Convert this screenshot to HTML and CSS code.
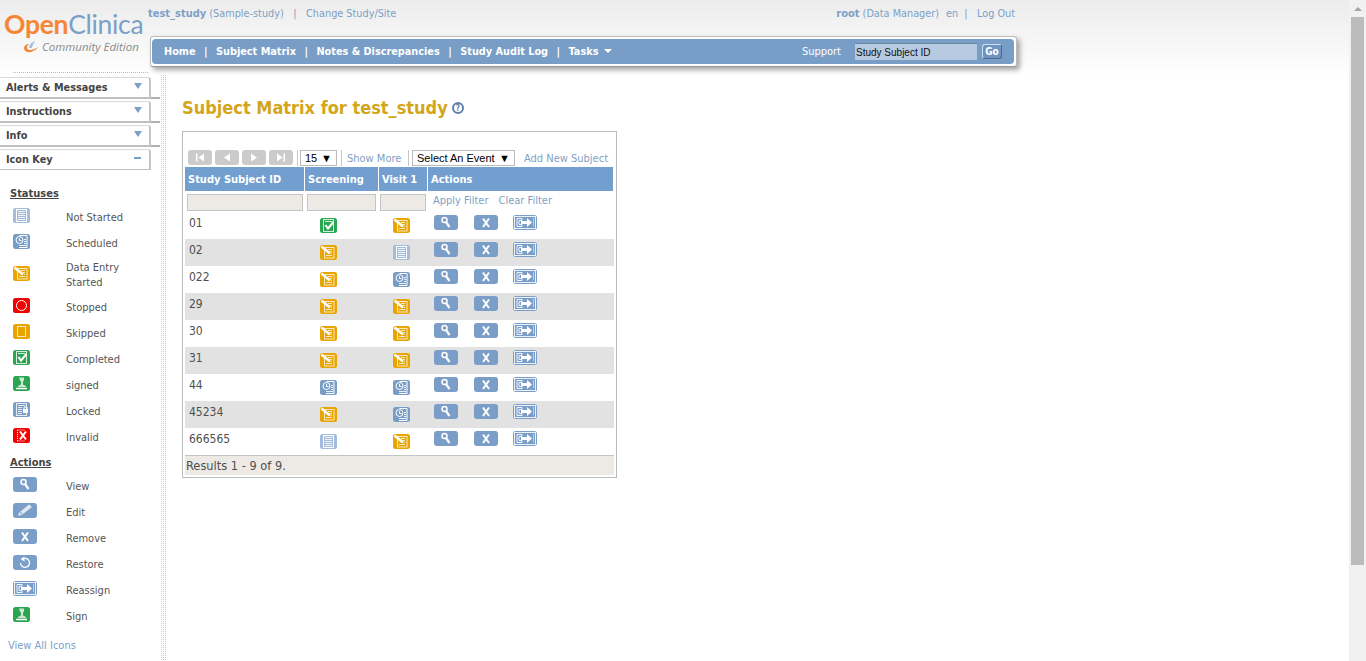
FILE: index.html
```html
<!DOCTYPE html>
<html lang="en">
<head>
<meta charset="utf-8">
<title>OpenClinica - Subject Matrix</title>
<link rel="stylesheet" href="styles.css">
</head>
<body>
<svg class="defs" width="0" height="0" aria-hidden="true">
  <defs>
    <symbol id="i-notstarted" viewBox="0 0 17 15"><rect width="17" height="15" rx="2.5" fill="#a3bcdb"/><rect x="3.500" y="1.500" width="10" height="12" fill="none" stroke="#fff"/><path d="M5 3.500h7M5 5.500h7M5 7.500h7M5 9.500h7M5 11.500h7" stroke="#fff" stroke-opacity=".85"/></symbol>
    <symbol id="i-scheduled" viewBox="0 0 17 15"><rect width="17" height="15" rx="2.5" fill="#789ec7"/><path d="M6.500 1.500h7.500v12h-8" fill="none" stroke="#fff"/><path d="M11 5.500h2M11 7.500h2M11 9.500h2M6 11.500h7" stroke="#fff" stroke-opacity=".85"/><circle cx="6.500" cy="6" r="3.500" fill="#789ec7" stroke="#fff"/><path d="M6.500 4v2.500h2" fill="none" stroke="#fff"/></symbol>
    <symbol id="i-entry" viewBox="0 0 17 15"><rect width="17" height="15" rx="2.5" fill="#e8a400"/><rect x="4.500" y="2.500" width="9.500" height="10.500" fill="none" stroke="#fff" stroke-opacity=".75"/><path d="M8 4.500h4M10 6.500h2M11 8.500h1M6 10.500h6" stroke="#fff" stroke-opacity=".75"/><path d="M1.500 1.500L10 8.500" stroke="#fff" stroke-width="2.500"/></symbol>
    <symbol id="i-stopped" viewBox="0 0 17 15"><rect width="17" height="15" rx="2.500" fill="#f40000"/><circle cx="8.500" cy="7.500" r="5" fill="none" stroke="#fff"/></symbol>
    <symbol id="i-skipped" viewBox="0 0 17 15"><rect width="17" height="15" rx="2.500" fill="#e8a400"/><rect x="4.500" y="2.500" width="8" height="10" fill="none" stroke="#fff" stroke-opacity=".75"/></symbol>
    <symbol id="i-completed" viewBox="0 0 17 15"><rect width="17" height="15" rx="2.500" fill="#2ca553"/><rect x="3.500" y="1.500" width="10" height="12" fill="none" stroke="#fff" stroke-opacity=".8"/><path d="M5 3.500h7" stroke="#fff" stroke-opacity=".8"/><path d="M5.500 7l2.500 3.500 5.500-6.500" fill="none" stroke="#fff" stroke-width="2"/></symbol>
    <symbol id="i-signed" viewBox="0 0 17 15"><rect width="17" height="15" rx="2.500" fill="#2ca553"/><path d="M6 1.500h5v3l-1 1v3l3 1.500v1h-8v-1l3-1.500v-3l-1-1z" fill="#cfe8d6"/><path d="M3 12.500h11" stroke="#fff" stroke-width="1.500"/></symbol>
    <symbol id="i-locked" viewBox="0 0 17 15"><rect width="17" height="15" rx="2.500" fill="#789ec7"/><rect x="3.500" y="1.500" width="10" height="12" fill="none" stroke="#fff" stroke-opacity=".8"/><path d="M5 3.500h7M5 5.500h4M5 7.500h4M5 9.500h4M5 11.500h4" stroke="#fff" stroke-opacity=".8"/><rect x="10" y="7" width="5" height="4" fill="#fff"/><path d="M11 7V5h3v2" fill="none" stroke="#fff"/></symbol>
    <symbol id="i-invalid" viewBox="0 0 17 15"><rect width="17" height="15" rx="2.500" fill="#f40000"/><path d="M4.500 2v11M4.500 2h8M4.500 13h8" stroke="#fff" stroke-dasharray="1 1"/><path d="M7 3.500l6 8M13 3.500l-6 8" stroke="#fff" stroke-width="2"/></symbol>
    <symbol id="a-view" viewBox="0 0 24 15"><rect width="24" height="15" rx="3" fill="#7a9ec7"/><circle cx="10.500" cy="5" r="2.500" fill="none" stroke="#fff" stroke-width="1.500"/><path d="M12 7l3.500 5" stroke="#fff" stroke-width="2.200"/></symbol>
    <symbol id="a-edit" viewBox="0 0 24 15"><rect width="24" height="15" rx="3" fill="#7a9ec7"/><path d="M5 13l1.200-3.500 9.800-8 3 2.500-9.500 7.500z" fill="#dfe8f3"/><path d="M7 9l3 2.500" stroke="#7a9ec7"/></symbol>
    <symbol id="a-remove" viewBox="0 0 24 15"><rect width="24" height="15" rx="3" fill="#7a9ec7"/><path d="M9 3.500l6 8.500M15 3.500l-6 8.500" stroke="#fff" stroke-width="2"/></symbol>
    <symbol id="a-restore" viewBox="0 0 24 15"><rect width="24" height="15" rx="3" fill="#7a9ec7"/><path d="M9 4.500a4.500 4.500 0 1 1-1.500 3.500" fill="none" stroke="#fff" stroke-width="1.300"/><path d="M11.500 1.500v5l-4-2.500z" fill="#fff"/></symbol>
    <symbol id="a-reassign" viewBox="0 0 24 15"><rect width="24" height="15" rx="3" fill="#7a9ec7"/><rect x="1.500" y="1.500" width="21" height="12" fill="none" stroke="#fff" stroke-opacity=".85"/><path d="M4 3.500h5v2h-3v4h3v2h-5z" fill="none" stroke="#fff" stroke-width=".9"/><path d="M8 6h6V3l5 4.500-5 4.500V9H8z" fill="#fff"/><path d="M20.500 3.500v8" stroke="#fff" stroke-dasharray="1 1"/></symbol>
    <symbol id="p-first" viewBox="0 0 24 15"><rect width="24" height="15" rx="3" fill="#cbcbcb"/><path d="M8 3.500h1.500v8H8zM16 3.500v8l-5.500-4z" fill="#fff"/></symbol>
    <symbol id="p-prev" viewBox="0 0 24 15"><rect width="24" height="15" rx="3" fill="#cbcbcb"/><path d="M15 3.500v8l-6-4z" fill="#fff"/></symbol>
    <symbol id="p-next" viewBox="0 0 24 15"><rect width="24" height="15" rx="3" fill="#cbcbcb"/><path d="M9 3.500v8l6-4z" fill="#fff"/></symbol>
    <symbol id="p-last" viewBox="0 0 24 15"><rect width="24" height="15" rx="3" fill="#cbcbcb"/><path d="M14.500 3.500H16v8h-1.500zM8 3.500v8l5.500-4z" fill="#fff"/></symbol>
  </defs>
</svg>

<div class="page">
  <div class="content">
    <header class="header">
      <div class="logo">
        <div class="logo-name"><span class="logo-open">Open</span><span class="logo-clinica">Clinica</span></div>
        <div class="logo-edition">
          <svg class="logo-swirl" viewBox="0 0 14 12" width="14" height="12"><path d="M0 7c0 3 3 5 7 4 3-1 6-3 7-5-3 2-5 3-8 3-2 0-3-1-3-3 0-1 1-2 2-3-3 0-5 2-5 4z" fill="#f08a3c"/><path d="M5 7c0-3 3-6 6-7-1 2-3 5-3 7z" fill="#a9c0dc"/></svg>
          <span>Community Edition</span>
        </div>
      </div>
      <div class="header-main">
        <div class="userbar">
          <div class="userbar-group"><a class="strong">test_study</a> <a>(Sample-study)</a><span class="pipe">|</span><a>Change Study/Site</a></div>
          <div class="userbar-group"><a class="strong">root</a> <a>(Data Manager)</a><a class="lang">en</a><span class="pipe">|</span><a>Log Out</a></div>
        </div>
        <div class="navbox">
          <nav class="nav">
            <a>Home</a><span class="sep">|</span><a>Subject Matrix</a><span class="sep">|</span><a>Notes &amp; Discrepancies</a><span class="sep">|</span><a>Study Audit Log</a><span class="sep">|</span><a>Tasks <span class="caret"></span></a>
            <a class="support">Support</a>
            <input class="search" type="text" value="Study Subject ID">
            <button class="go" type="button">Go</button>
          </nav>
        </div>
      </div>
    </header>

    <div class="body">
      <aside class="sidebar">
        <div class="tab"><span>Alerts &amp; Messages</span><span class="tri"></span></div>
        <div class="tab"><span>Instructions</span><span class="tri"></span></div>
        <div class="tab"><span>Info</span><span class="tri"></span></div>
        <div class="tab tab-open"><span>Icon Key</span><span class="minus"></span></div>

        <div class="key">
          <h4 class="key-head">Statuses</h4>
          <ul class="key-list">
            <li><svg class="si"><use href="#i-notstarted"/></svg><span>Not Started</span></li>
            <li><svg class="si"><use href="#i-scheduled"/></svg><span>Scheduled</span></li>
            <li class="tall"><svg class="si"><use href="#i-entry"/></svg><span>Data Entry Started</span></li>
            <li><svg class="si"><use href="#i-stopped"/></svg><span>Stopped</span></li>
            <li><svg class="si"><use href="#i-skipped"/></svg><span>Skipped</span></li>
            <li><svg class="si"><use href="#i-completed"/></svg><span>Completed</span></li>
            <li><svg class="si"><use href="#i-signed"/></svg><span>signed</span></li>
            <li><svg class="si"><use href="#i-locked"/></svg><span>Locked</span></li>
            <li><svg class="si"><use href="#i-invalid"/></svg><span>Invalid</span></li>
          </ul>
          <h4 class="key-head key-head-actions">Actions</h4>
          <ul class="key-list">
            <li><svg class="ai"><use href="#a-view"/></svg><span>View</span></li>
            <li><svg class="ai"><use href="#a-edit"/></svg><span>Edit</span></li>
            <li><svg class="ai"><use href="#a-remove"/></svg><span>Remove</span></li>
            <li><svg class="ai"><use href="#a-restore"/></svg><span>Restore</span></li>
            <li><svg class="ai"><use href="#a-reassign"/></svg><span>Reassign</span></li>
            <li><svg class="si"><use href="#i-signed"/></svg><span>Sign</span></li>
          </ul>
        </div>
        <a class="all-icons">View All Icons</a>
      </aside>
      <div class="dots"></div>

      <main class="main">
        <h1 class="title">Subject Matrix for test_study <span class="help">?</span></h1>
        <section class="matrix">
          <div class="toolbar">
            <svg class="pg"><use href="#p-first"/></svg>
            <svg class="pg"><use href="#p-prev"/></svg>
            <svg class="pg"><use href="#p-next"/></svg>
            <svg class="pg"><use href="#p-last"/></svg>
            <span class="vr vr-first"></span>
            <span class="sel sel-size"><span>15</span><span class="arrow">▼</span></span>
            <span class="vr vr-mid"></span>
            <a class="tool-link show-more">Show More</a>
            <span class="vr vr-mid2"></span>
            <span class="sel sel-event"><span>Select An Event</span><span class="arrow">▼</span></span>
            <a class="tool-link add-new">Add New Subject</a>
          </div>
          <table class="grid">
            <colgroup><col class="c1"><col class="c2"><col class="c3"><col class="c4"></colgroup>
            <thead>
              <tr class="head"><th>Study Subject ID</th><th>Screening</th><th>Visit 1</th><th>Actions</th></tr>
              <tr class="filter">
                <td><input class="f f1" type="text"></td>
                <td><input class="f f2" type="text"></td>
                <td class="filter-third"><input class="f f3" type="text"></td>
                <td class="filter-links"><a class="filter-link">Apply Filter</a><a class="filter-link">Clear Filter</a></td>
              </tr>
            </thead>
            <tbody>
              <tr><td>01</td><td class="st"><svg class="si"><use href="#i-completed"/></svg></td><td class="st"><svg class="si"><use href="#i-entry"/></svg></td><td class="acts"><svg class="ai"><use href="#a-view"/></svg><svg class="ai"><use href="#a-remove"/></svg><svg class="ai"><use href="#a-reassign"/></svg></td></tr>
              <tr class="alt"><td>02</td><td class="st"><svg class="si"><use href="#i-entry"/></svg></td><td class="st"><svg class="si"><use href="#i-notstarted"/></svg></td><td class="acts"><svg class="ai"><use href="#a-view"/></svg><svg class="ai"><use href="#a-remove"/></svg><svg class="ai"><use href="#a-reassign"/></svg></td></tr>
              <tr><td>022</td><td class="st"><svg class="si"><use href="#i-entry"/></svg></td><td class="st"><svg class="si"><use href="#i-scheduled"/></svg></td><td class="acts"><svg class="ai"><use href="#a-view"/></svg><svg class="ai"><use href="#a-remove"/></svg><svg class="ai"><use href="#a-reassign"/></svg></td></tr>
              <tr class="alt"><td>29</td><td class="st"><svg class="si"><use href="#i-entry"/></svg></td><td class="st"><svg class="si"><use href="#i-entry"/></svg></td><td class="acts"><svg class="ai"><use href="#a-view"/></svg><svg class="ai"><use href="#a-remove"/></svg><svg class="ai"><use href="#a-reassign"/></svg></td></tr>
              <tr><td>30</td><td class="st"><svg class="si"><use href="#i-entry"/></svg></td><td class="st"><svg class="si"><use href="#i-entry"/></svg></td><td class="acts"><svg class="ai"><use href="#a-view"/></svg><svg class="ai"><use href="#a-remove"/></svg><svg class="ai"><use href="#a-reassign"/></svg></td></tr>
              <tr class="alt"><td>31</td><td class="st"><svg class="si"><use href="#i-entry"/></svg></td><td class="st"><svg class="si"><use href="#i-entry"/></svg></td><td class="acts"><svg class="ai"><use href="#a-view"/></svg><svg class="ai"><use href="#a-remove"/></svg><svg class="ai"><use href="#a-reassign"/></svg></td></tr>
              <tr><td>44</td><td class="st"><svg class="si"><use href="#i-scheduled"/></svg></td><td class="st"><svg class="si"><use href="#i-scheduled"/></svg></td><td class="acts"><svg class="ai"><use href="#a-view"/></svg><svg class="ai"><use href="#a-remove"/></svg><svg class="ai"><use href="#a-reassign"/></svg></td></tr>
              <tr class="alt"><td>45234</td><td class="st"><svg class="si"><use href="#i-entry"/></svg></td><td class="st"><svg class="si"><use href="#i-scheduled"/></svg></td><td class="acts"><svg class="ai"><use href="#a-view"/></svg><svg class="ai"><use href="#a-remove"/></svg><svg class="ai"><use href="#a-reassign"/></svg></td></tr>
              <tr><td>666565</td><td class="st"><svg class="si"><use href="#i-notstarted"/></svg></td><td class="st"><svg class="si"><use href="#i-entry"/></svg></td><td class="acts"><svg class="ai"><use href="#a-view"/></svg><svg class="ai"><use href="#a-remove"/></svg><svg class="ai"><use href="#a-reassign"/></svg></td></tr>
            </tbody>
          </table>
          <div class="results">Results 1 - 9 of 9.</div>
        </section>
      </main>
    </div>
  </div>
  <div class="scrollbar" aria-hidden="true">
    <div class="sb-up"></div>
    <div class="sb-thumb"></div>
    <div class="sb-down"></div>
  </div>
</div>
</body>
</html>
```

FILE: styles.css
```css
* { box-sizing: border-box; }
html, body { margin: 0; padding: 0; height: 100%; overflow: hidden; background: #fff; }
body { font-family: "DejaVu Sans Condensed", "DejaVu Sans", sans-serif; font-size: 11px; color: #4f4f4f; }
a { color: #7f9fc6; text-decoration: none; }
.defs { position: absolute; }
svg { display: block; }
.si { width: 17px; height: 15px; }
.ai { width: 24px; height: 15px; }

.page { display: flex; height: 661px; }
.content { flex: 1; min-width: 0; display: flex; flex-direction: column; }

.header { height: 77px; display: flex; background: linear-gradient(#ececec, #fff); }
.logo { width: 148px; padding: 9px 0 0 4px; }
.logo-name { font-family: "Lato", sans-serif; font-size: 26.500px; line-height: 30px; letter-spacing: -.3px; white-space: nowrap; }
.logo-open { color: #f58634; font-weight: 700; }
.logo-clinica { color: #7b9fc6; font-weight: 400; }
.logo-edition { display: flex; align-items: center; gap: 4px; margin: 0 0 0 20px; font-family: "Open Sans", sans-serif; font-style: italic; font-size: 11.500px; line-height: 15px; color: #8a8a8a; white-space: nowrap; }

.header-main { width: 875px; }
.userbar { display: flex; justify-content: space-between; height: 36px; padding: 6px 8px 0 0; line-height: 16px; font-size: 10.800px; }
.strong { font-weight: 700; font-size: 11px; }
.pipe { color: #7f9fc6; margin: 0 9.500px; }
.userbar-group:last-child .pipe { margin-left: 6px; }
.lang { margin-left: 7px; }
.navbox { width: 867px; height: 31px; margin-left: 2px; background: #fff; border: 1px solid #bbb; border-bottom-color: #999; border-radius: 3px; padding: 2px 2px 2px 1px; box-shadow: 3px 3px 5px rgba(0,0,0,.35); }
.nav { height: 25px; background: #789ec7; border-radius: 4px; display: flex; align-items: center; padding: 0 12px 0 12px; color: #fff; font-weight: 700; font-size: 10.800px; white-space: nowrap; }
.nav a { color: #fff; }
.nav .sep { margin: 0 8.500px; }
.caret { display: inline-block; margin-left: 2px; border: 4px solid transparent; border-top: 4px solid #fff; border-bottom: 0; vertical-align: 2px; }
.nav .support { margin-left: auto; font-weight: 400; font-size: 11px; }
.search { width: 122px; height: 17px; margin: 0 5px 0 14px; padding: 0 0 0 1px; border: 0; border-top: 1px solid #6c87a6; background: #b7cae2; font: 10px "Liberation Sans", sans-serif; color: #111; }
.go { width: 20px; height: 15px; padding: 0; border: 1px solid #cfdcec; border-right-color: #4e6b8e; border-bottom-color: #4e6b8e; border-radius: 3px; background: #6f94bf; color: #fff; font: 700 10px "DejaVu Sans Condensed", sans-serif; }

.body { flex: 1; display: flex; min-height: 0; }
.sidebar { width: 160px; position: relative; }
.sidebar::before { content: ""; position: absolute; left: 13px; top: -5px; width: 135px; border-top: 1px dotted #bbb; }
.tab { position: relative; width: 151px; height: 22px; margin-bottom: 2px; display: flex; justify-content: space-between; align-items: center; padding: 0 7px 1px 6px; background: #fff; border-top: 1px solid #d8d8d8; border-right: 2px solid #c4c4c4; border-bottom: 2px solid #c0c0c0; border-top-right-radius: 3px; color: #444; font-weight: 700; font-size: 10.800px; }
.tab::after { content: ""; position: absolute; left: 151px; bottom: -2px; width: 9px; height: 2px; background: #b0b0b0; }
.tab-open { height: 21px; margin-bottom: 0; border-bottom-width: 1px; }
.tab-open::after { display: none; }
.tri { width: 0; height: 0; border: 4px solid transparent; border-top: 6px solid #7a9ec7; border-bottom: 0; margin-top: -3px; }
.minus { width: 7px; height: 2px; background: #7a9ec7; margin-right: 1px; margin-top: -2px; }

.key { padding: 16px 0 0 10px; }
.key-head { margin: 0; font-size: 11px; line-height: 15px; font-weight: 700; color: #444; text-decoration: underline; }
.key-head-actions { margin-top: 5px; }
.key-list { list-style: none; margin: 3px 0 0; padding: 0 0 0 3px; }
.key-list li { display: grid; grid-template-columns: 53px 75px; align-items: center; height: 26px; line-height: 15px; color: #555; font-size: 11px; }
.key-list li svg { margin-top: -3px; }
.key-list li.tall { height: 38px; }
.all-icons { display: block; margin: 10px 0 0 8px; font-size: 11px; }

.dots { width: 7px; margin-top: -3px; background-image: linear-gradient(90deg, #fff 1px, transparent 1px), linear-gradient(#fff 1px, #c8c8c8 1px); background-size: 2px 2px; }

.main { flex: 1; padding: 0 0 0 15px; }
.title { margin: 20px 0 12px; font-size: 18px; line-height: 22px; font-weight: 700; color: #d4a519; display: flex; align-items: center; gap: 4px; }
.help { width: 12px; height: 12px; border-radius: 50%; border: 2px solid #5f7fae; color: #5f7fae; font-size: 8px; line-height: 9px; text-align: center; }

.matrix { width: 435px; height: 347px; border: 1px solid #bbb; padding: 18px 2px 0 2px; }
.toolbar { display: flex; align-items: flex-start; height: 17px; padding-left: 3px; }
.pg { width: 24px; height: 15px; margin-right: 3px; flex: none; }
.vr { width: 1px; height: 16px; background: #c8c8c8; }
.vr-first { margin: 0 2px 0 1px; }
.vr-mid { margin: 0 5px 0 4px; }
.vr-mid2 { margin: 0 3px 0 6px; }
.sel { display: flex; align-items: center; justify-content: space-between; flex: none; height: 16px; padding: 0 4px 0 4px; border: 1px solid #bbb; background: #fff; font: 11px "Liberation Sans", sans-serif; color: #000; white-space: nowrap; }
.sel-size { width: 37px; }
.sel-event { width: 103px; }
.arrow { font-size: 11px; }
.tool-link { white-space: nowrap; font-size: 11px; line-height: 17px; }
.show-more { width: 55px; }
.add-new { margin-left: 9px; }

.grid { border-collapse: separate; border-spacing: 0; table-layout: fixed; width: 429px; }
.c1 { width: 120px; } .c2 { width: 74px; } .c3 { width: 49px; } .c4 { width: 186px; }
.grid td, .grid th { padding: 0; }
.head th { height: 24px; background: #729fcf; color: #fff; text-align: left; padding-left: 3px; font-size: 11px; border-right: 1px solid #fff; }
.filter td { height: 21px; padding: 1px 0 0 2px; }
.grid .filter-third { padding-left: 1px; }
.grid .filter-links { padding: 0 0 2px 2px; }
.f { display: block; height: 17px; background: #edeae6; border: 1px solid #c4c4c4; padding: 0; }
.f1 { width: 116px; } .f2 { width: 69px; } .f3 { width: 46px; }
.filter-link { margin: 0 10px 0 3px; font-size: 11px; }
.filter-link + .filter-link { margin-left: 0; }
.grid tbody tr { height: 27px; }
.grid tbody td { vertical-align: top; padding: 3px 0 0 4px; line-height: 16px; font-size: 12px; }
.grid tbody tr.alt td { background: #e2e2e2; }
.grid tbody td.st { padding: 6px 0 0 15px; }
.grid tbody td.st + td.st { padding-left: 14px; }
.grid tbody td.acts { padding: 3px 0 0 6px; }
.acts svg { display: inline-block; margin-right: 16px; }
.acts svg:nth-child(2) { margin-right: 15px; }
.results { height: 20px; width: 429px; border-top: 1px solid #c4c4c4; background: #edeae6; padding-left: 1px; line-height: 20px; font-size: 12.700px; }

.scrollbar { width: 17px; background: #f1f1f1; display: flex; flex-direction: column; align-items: center; }
.sb-up { height: 17px; width: 100%; position: relative; }
.sb-up::after { content: ""; position: absolute; left: 5px; top: 7px; border: 4px solid transparent; border-top: 0; border-bottom: 4px solid #a3a3a3; }
.sb-thumb { width: 13px; height: 548px; background: #bcbcbc; }
.sb-down { flex: 1; }
```
